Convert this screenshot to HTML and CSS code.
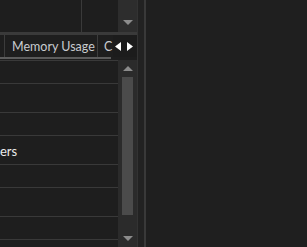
FILE: index.html
```html
<!DOCTYPE html>
<html>
<head>
<meta charset="utf-8">
<link rel="stylesheet" href="styles.css">
</head>
<body>
<div class="app">
  <div class="left">
    <div class="top">
      <div class="grid">
        <div class="gcell"></div>
        <div class="gcell2"></div>
      </div>
      <div class="vscroll">
        <svg class="arr-down-top" width="10" height="5" viewBox="0 0 10 5"><path d="M0 0H10L5 5Z" fill="#8c8c8c"/></svg>
      </div>
    </div>
    <div class="band"></div>
    <div class="tabs">
      <div class="tab tab-prev"></div>
      <div class="tab tab-mem">Memory Usage</div>
      <div class="tab tab-c">C</div>
      <div class="tabnav">
        <svg width="6" height="9" viewBox="0 0 6 9"><path d="M6 0V9L0 4.5Z" fill="#ffffff"/></svg>
        <svg width="6" height="9" viewBox="0 0 6 9"><path d="M0 0V9L6 4.5Z" fill="#ffffff"/></svg>
      </div>
    </div>
    <div class="under"><div class="underline"></div></div>
    <div class="list">
      <div class="rows">
        <div class="row short"></div>
        <div class="row tall"></div>
        <div class="row short"></div>
        <div class="row tall"><span class="cell">ers</span></div>
        <div class="row short"></div>
        <div class="row tall"></div>
        <div class="row short"></div>
        <div class="row tall"></div>
      </div>
      <div class="lscroll">
        <svg class="arr" width="10" height="5" viewBox="0 0 10 5"><path d="M0 5H10L5 0Z" fill="#8c8c8c"/></svg>
        <div class="thumb"></div>
        <svg class="arr" width="10" height="5" viewBox="0 0 10 5"><path d="M0 0H10L5 5Z" fill="#8c8c8c"/></svg>
      </div>
    </div>
  </div>
  <div class="sep">
    <div class="sep-a"></div>
    <div class="sep-b"></div>
    <div class="sep-c"></div>
  </div>
  <div class="right"></div>
</div>
</body>
</html>
```
FILE: styles.css
```css
html, body {
  margin: 0;
  padding: 0;
  background: #1f1f1f;
  overflow: hidden;
}
.app {
  display: flex;
  width: 307px;
  height: 247px;
  font-family: Lato, "Noto Sans", sans-serif;
}
.left {
  width: 137px;
  display: flex;
  flex-direction: column;
  background: #1e1e1e;
}
.top {
  height: 32px;
  display: flex;
}
.grid {
  flex: 1;
  display: flex;
}
.gcell {
  width: 81px;
  border-right: 1px solid #3a3a3a;
}
.gcell2 {
  flex: 1;
}
.vscroll {
  width: 19px;
  background: #2d2d2d;
  display: flex;
  flex-direction: column;
  align-items: center;
  justify-content: flex-end;
  padding-bottom: 7px;
  box-sizing: border-box;
}
.band {
  height: 3px;
  background: #3a3a3a;
}
.tabs {
  height: 22px;
  display: flex;
  overflow: hidden;
  background: #1e1e1e;
}
.tab {
  border-right: 1px solid #3c3c3c;
  color: #c9ccd0;
  font-size: 12.5px;
  line-height: 23px;
  white-space: nowrap;
  box-sizing: border-box;
}
.tab-prev {
  width: 5px;
}
.tab-mem {
  width: 93px;
  padding-left: 7px;
}
.tab-c {
  width: 15px;
  padding-left: 6px;
  border-right: none;
}
.tabnav {
  flex: 1;
  display: flex;
  align-items: center;
  gap: 6px;
  padding-left: 2px;
  background: #1c1c1c;
}
.under {
  height: 2px;
  background: #1e1e1e;
}
.underline {
  width: 111px;
  height: 2px;
  background: #5c5c5c;
}
.list {
  flex: 1;
  display: flex;
  margin-top: 1px;
  min-height: 0;
}
.rows {
  flex: 1;
  display: flex;
  flex-direction: column;
  border-top: 1px solid #393939;
  overflow: hidden;
}
.row {
  flex: none;
  border-bottom: 1px solid #393939;
  box-sizing: border-box;
  display: flex;
  align-items: center;
}
.short {
  height: 23px;
}
.tall {
  height: 29px;
}
.cell {
  color: #ececec;
  font-size: 13px;
  margin-top: 2px;
}
.lscroll {
  width: 19px;
  background: #2b2b2b;
  display: flex;
  flex-direction: column;
  align-items: center;
  padding: 6px 0 6px;
  box-sizing: border-box;
}
.thumb {
  width: 11px;
  height: 139px;
  background: #4b4b4b;
  margin: 6px 0 21px;
}
.sep {
  display: flex;
  width: 9px;
}
.sep-a {
  width: 1px;
  background: #333333;
}
.sep-b {
  width: 6px;
  background: #222222;
}
.sep-c {
  width: 2px;
  background: #393939;
}
.right {
  flex: 1;
  background: #1f1f1f;
}
```
